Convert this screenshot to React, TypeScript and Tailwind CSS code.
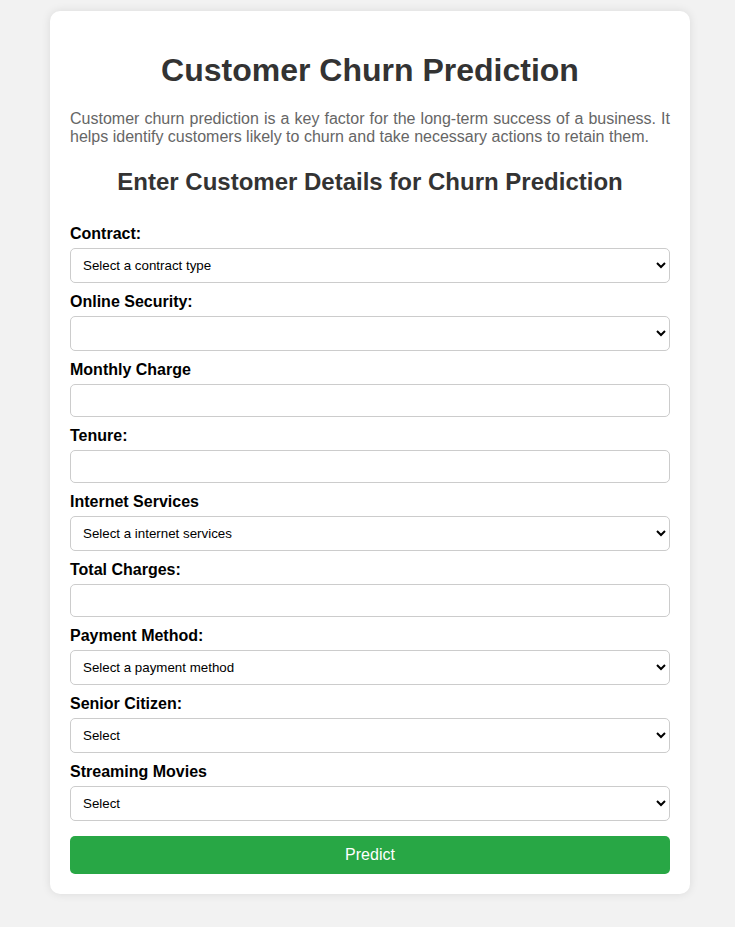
import React from "react";

const font = { fontFamily: '"Liberation Sans", Arial, sans-serif' };

function Field({ label, children }: { label: string; children: React.ReactNode }) {
  return (
    <div>
      <label className="block font-bold text-[16px] leading-[18px] mb-[5px] text-black">{label}</label>
      {children}
    </div>
  );
}

const selectCls =
  "block w-full h-[35px] px-[8px] mb-[10px] border border-[#ccc] rounded-[5px] bg-white text-[13.33px] text-black";
const inputCls =
  "block w-full h-[33px] px-[8px] mb-[10px] border border-[#ccc] rounded-[5px] bg-white text-[13.33px] text-black";

export default function App() {
  return (
    <div className="min-h-[927px] bg-[#f2f2f2] pt-[11px] pb-[30px]" style={font}>
      <div className="ml-[50px] w-[640px] bg-white rounded-[10px] shadow-[0_0_10px_rgba(0,0,0,0.1)] p-[20px]">
        <h1 className="text-[32px] font-bold text-[#333] text-center leading-[37px] mt-[21px] mb-[21px]">
          Customer Churn Prediction
        </h1>
        <p className="text-[16px] leading-[18px] text-[#666] text-justify mb-[16px]">
          Customer churn prediction is a key factor for the long-term success of a business. It helps identify
          customers likely to churn and take necessary actions to retain them.
        </p>
        <h2 className="text-[24px] font-bold text-[#333] text-center leading-[28px] mt-[22px] mb-[29px]">
          Enter Customer Details for Churn Prediction
        </h2>
        <form onSubmit={(e) => e.preventDefault()}>
          <Field label="Contract:">
            <select className={selectCls} defaultValue="">
              <option value="">Select a contract type</option>
              <option>Month-to-month</option>
              <option>One year</option>
              <option>Two year</option>
            </select>
          </Field>
          <Field label="Online Security:">
            <select className={selectCls} defaultValue="">
              <option value=""></option>
              <option>Yes</option>
              <option>No</option>
            </select>
          </Field>
          <Field label="Monthly Charge">
            <input type="text" className={inputCls} />
          </Field>
          <Field label="Tenure:">
            <input type="text" className={inputCls} />
          </Field>
          <Field label="Internet Services">
            <select className={selectCls} defaultValue="">
              <option value="">Select a internet services</option>
              <option>DSL</option>
              <option>Fiber optic</option>
              <option>No</option>
            </select>
          </Field>
          <Field label="Total Charges:">
            <input type="text" className={inputCls} />
          </Field>
          <Field label="Payment Method:">
            <select className={selectCls} defaultValue="">
              <option value="">Select a payment method</option>
              <option>Electronic check</option>
              <option>Mailed check</option>
            </select>
          </Field>
          <Field label="Senior Citizen:">
            <select className={selectCls} defaultValue="">
              <option value="">Select</option>
              <option>Yes</option>
              <option>No</option>
            </select>
          </Field>
          <Field label="Streaming Movies">
            <select className={selectCls} defaultValue="">
              <option value="">Select</option>
              <option>Yes</option>
              <option>No</option>
            </select>
          </Field>
          <button
            type="submit"
            className="block w-full h-[38px] mt-[15px] bg-[#28a745] text-white text-[16px] rounded-[5px] border-0"
          >
            Predict
          </button>
        </form>
      </div>
    </div>
  );
}
